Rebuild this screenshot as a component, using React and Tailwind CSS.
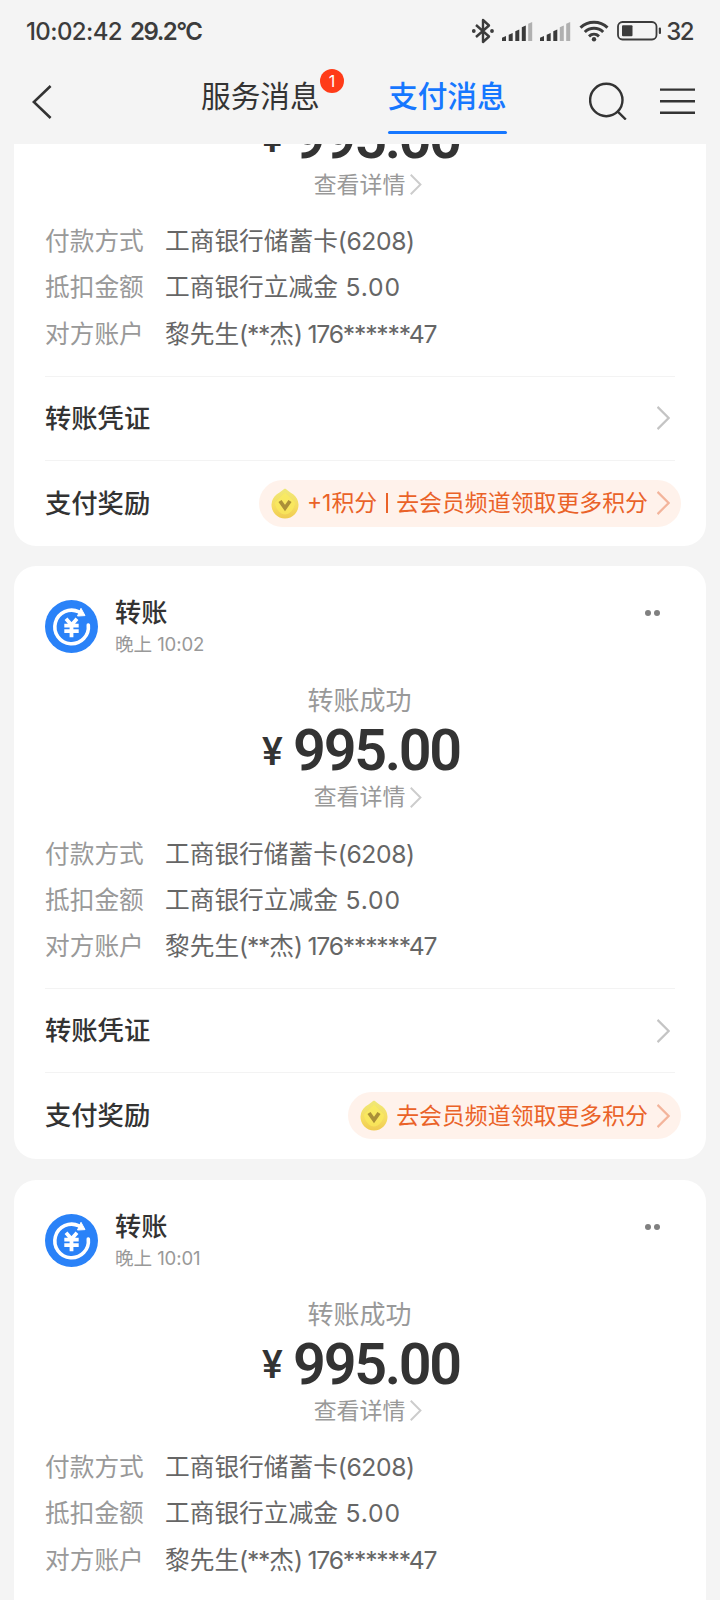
const rows = [
  { label: '付款方式', cn: '工商银行储蓄卡', num: '(6208)', spacing: 'tracking-[-0.4px]' },
  { label: '抵扣金额', cn: '工商银行立减金', num: ' 5.00', spacing: 'tracking-[0.8px]' },
  { label: '对方账户', cn: '黎先生', num: '(**', cn2: '杰', num2: ') 176******47', spacing: 'tracking-[-1.2px]' },
]

const messages = [
  { id: 1, time: '10:02', reward: '去会员频道领取更多积分', points: '+1积分', scrolled: true },
  { id: 2, time: '10:02', reward: '去会员频道领取更多积分' },
  { id: 3, time: '10:01', reward: '去会员频道领取更多积分' },
]

function Chevron({ className }) {
  return (
    <svg viewBox="0 0 13 24" fill="none" stroke="currentColor" strokeWidth="2.2" className={className}>
      <path d="M0.5 0.9 L11.6 12 L0.5 23.1" />
    </svg>
  )
}

function Signal({ bars }) {
  const all = [
    [0, 14, 5], [6.7, 11, 8], [13.3, 7.5, 11.5], [19.8, 3.5, 15.5], [26.2, 0, 19],
  ]
  return (
    <svg viewBox="0 0 31 19" className="w-[31px] h-[19px]">
      {all.map(([x, y, h], i) => (
        <path key={x} d={`M${x} ${y + 1.8} L${x + 4} ${y} V${y + h} H${x} Z`} fill={i < bars ? '#3a3a3a' : '#b0b0b0'} />
      ))}
    </svg>
  )
}

function StatusBar() {
  return (
    <div className="h-[62px] pl-[26px] pr-[27px] flex items-center justify-between text-[#3c3c3c] text-2xl">
      <div className="flex items-center font-medium pt-px">
        <span className="w-[104px] tracking-[-0.6px]">10:02:42</span>
        <span className="font-semibold tracking-[-1.5px]">29.2°C</span>
      </div>
      <div className="flex items-center">
        <svg viewBox="0 0 24 26" fill="none" stroke="currentColor" strokeWidth="2.4" strokeLinejoin="round" className="w-6 h-[26px] mr-[7px]">
          <path d="M5 7 L18 18.5 L12 24 V2 L18 7.5 L5 19" />
          <circle cx="2.8" cy="13" r="1.1" fill="currentColor" strokeWidth="1.6" />
          <circle cx="21" cy="13" r="1.1" fill="currentColor" strokeWidth="1.6" />
        </svg>
        <Signal bars={4} />
        <span className="w-[7px]" />
        <Signal bars={3} />
        <svg viewBox="0 0 30 22" fill="none" stroke="currentColor" strokeWidth="3" className="w-[30px] h-[22px] ml-2 mr-[8px]">
          <path d="M1.5 7.6 C9 0.3 21 0.3 28.5 7.6" />
          <path d="M5.8 12 C11 7 19 7 24.2 12" />
          <path d="M10 16.3 C13 13.6 17 13.6 20 16.3" />
          <circle cx="15" cy="19.3" r="2.2" fill="currentColor" stroke="none" />
        </svg>
        <svg viewBox="0 0 45 20" fill="none" className="w-[45px] h-5 mr-[4px]">
          <rect x="1" y="1" width="38.5" height="17.5" rx="4.5" stroke="currentColor" strokeWidth="1.8" />
          <rect x="5" y="4.3" width="10.5" height="11" rx="1" fill="currentColor" />
          <rect x="41.8" y="6.5" width="2.2" height="6.5" rx="1" fill="currentColor" />
        </svg>
        <span className="font-medium tracking-[-1.6px] pt-px">32</span>
      </div>
    </div>
  )
}

function NavBar() {
  return (
    <div className="h-[82px] flex items-start text-[#333]">
      <svg viewBox="0 0 20 34" fill="none" stroke="currentColor" strokeWidth="2.6" className="w-5 h-[34px] ml-[32px] mt-[23px]">
        <path d="M18.6 1 L1.8 17 L18.6 33" />
      </svg>
      <div className="relative ml-[149px] mt-[14px] w-[119px] text-[29.7px] leading-[40px] whitespace-nowrap">
        服务消息
        <span className="absolute left-[119px] -top-[7px] size-6 rounded-full bg-[#ff3b18] text-white text-base leading-6 text-center">1</span>
      </div>
      <div className="ml-[68px] mt-[14px] w-[119px] h-[58px] text-[29.7px] leading-[40px] font-medium text-[#1677ff] whitespace-nowrap flex flex-col justify-between">
        支付消息
        <span className="h-[3.5px] rounded-full bg-[#1677ff]" />
      </div>
      <svg viewBox="0 0 38 38" fill="none" stroke="currentColor" strokeWidth="2.4" className="size-[38px] ml-[82px] mt-[20px]">
        <circle cx="17.3" cy="18" r="16.2" />
        <path d="M28.5 29.3 L36.8 37.5" />
      </svg>
      <svg viewBox="0 0 35 26" stroke="currentColor" strokeWidth="2.4" className="w-[35px] h-[26px] ml-[33px] mt-[26px]">
        <path d="M0 1.6 H35 M0 13.2 H35 M0 24.8 H35" />
      </svg>
    </div>
  )
}

function TransferIcon() {
  return (
    <svg viewBox="0 0 53 53" fill="none" className="size-[53px]">
      <circle cx="26.5" cy="26.5" r="26.5" fill="#2a82f8" />
      <path d="M43.3 25 A16.8 16.8 0 1 1 34 11.9" stroke="#fff" strokeWidth="3.6" strokeLinecap="round" />
      <path d="M36 8.3 L40 15.6 L32.5 16 Z" fill="#fff" stroke="#fff" strokeWidth="1" strokeLinejoin="round" />
      <path d="M21 18.8 L26.5 25 L32 18.8 M19.3 25.6 H33.7 M19.3 31.2 H33.7 M26.5 25 V37.3" stroke="#fff" strokeWidth="3.8" />
    </svg>
  )
}

function PointIcon() {
  return (
    <svg viewBox="0 0 28 31" fill="none" className="w-7 h-[31px]">
      <defs>
        <linearGradient id="coin" x1="0" y1="0" x2="0" y2="1">
          <stop offset="0" stopColor="#efe877" />
          <stop offset="0.6" stopColor="#f6dc60" />
          <stop offset="1" stopColor="#efcb50" />
        </linearGradient>
      </defs>
      <path d="M14 0.8 C15.5 0.8 17 3.2 22.5 6.6 A13.5 13.5 0 1 1 5.5 6.6 C11 3.2 12.5 0.8 14 0.8 Z" fill="url(#coin)" />
      <path d="M14 4.5 L24 14.5 C24 20 19 26.5 14 26.5 C9 26.5 4 20 4 14.5 Z" fill="#fbee5c" opacity="0.6" />
      <path d="M9 13 L14 20 L19 13" stroke="#ab9038" strokeWidth="3.8" />
    </svg>
  )
}

function CardHeader({ time }) {
  return (
    <>
      <div className="flex h-[64px]">
        <div className="pt-[5px]"><TransferIcon /></div>
        <div className="ml-[17px] flex-1">
          <div className="text-[26.2px] leading-[35px] font-medium">转账</div>
          <div className="text-[18.6px] leading-[28px] text-[#999] tracking-[-0.1px]">晚上 {time}</div>
        </div>
        <div className="flex gap-[3.5px] pt-[15px] mr-[15px]">
          <span className="size-1.5 rounded-full bg-[#808080]" />
          <span className="size-1.5 rounded-full bg-[#808080]" />
        </div>
      </div>
      <div className="pt-[24px] text-[26px] leading-[36px] text-[#999] text-center -ml-[1px]">转账成功</div>
    </>
  )
}

function MessageCard({ message }) {
  return (
    <div className={`bg-white px-[31px] text-[#333] ${message.scrolled ? 'h-[439px] rounded-b-[22px]' : 'h-[593px] rounded-[22px] pt-[29px]'}`}>
      {!message.scrolled && <CardHeader time={message.time} />}

      {/* Amount */}
      <div className="flex flex-col items-center">
        <div className="flex items-baseline h-[61px] leading-[63px] font-[Roboto] whitespace-nowrap ml-[2px]">
          <span className="text-[39px] leading-[39px] font-medium w-[31px] pb-[2px] self-center pt-[7px]">¥</span>
          <span className="text-[57.5px] font-semibold tracking-[-2.3px]">995.00</span>
        </div>
        <div className="flex items-center text-[22.9px] leading-[34px] text-[#999] ml-[16px]">
          查看详情
          <Chevron className="w-[12px] h-[21px] ml-[5px] text-[#ccc]" />
        </div>
      </div>

      {/* Payment rows */}
      <div className="pt-[16.5px] text-[24.7px] leading-[46.4px]">
        {rows.map(row => (
          <div key={row.label} className="flex whitespace-pre">
            <span className="w-[120px] text-[#999]">{row.label}</span>
            <span className="text-[#666] [font-feature-settings:'calt'_0]">
              {row.cn}<span className={row.spacing}>{row.num}</span>
              {row.cn2}<span className={row.spacing}>{row.num2}</span>
            </span>
          </div>
        ))}
      </div>

      <div className="mt-[18.5px] h-[84px] border-t border-[#f3f3f3] flex items-center justify-between text-[26.3px] font-medium">
        转账凭证
        <Chevron className="w-[13px] h-6 mr-[5px] text-[#c4c4c4]" />
      </div>
      <div className="h-[86px] border-t border-[#f3f3f3] flex items-center justify-between text-[26.3px] font-medium">
        支付奖励
        <div className="-mr-[6px] h-[47px] rounded-full bg-[#fff2eb] pl-[12px] pr-[11px] flex items-center text-[22.9px] font-normal text-[#ea6228] whitespace-nowrap">
          <PointIcon />
          {message.points && (
            <span className="ml-2 flex items-center">
              {message.points}
              <span className="w-[2px] h-[20px] mx-[8.5px] bg-[#ea6228]" />
            </span>
          )}
          <span className={message.points ? '' : 'ml-2'}>{message.reward}</span>
          <Chevron className="w-[13px] h-6 ml-[9px] text-[#f3b49b]" />
        </div>
      </div>
    </div>
  )
}

export default function App() {
  return (
    <div lang="zh-CN" className="w-[720px] h-[1600px] bg-[#f4f4f4] overflow-hidden flex flex-col font-['Inter','Noto_Sans_CJK_SC',sans-serif]">
      <StatusBar />
      <NavBar />
      <div className="flex-1 min-h-0 overflow-hidden px-[14px]">
        <div className="-mt-[37.5px] flex flex-col gap-[20.5px]">
          {messages.map(message => <MessageCard key={message.id} message={message} />)}
        </div>
      </div>
    </div>
  )
}
